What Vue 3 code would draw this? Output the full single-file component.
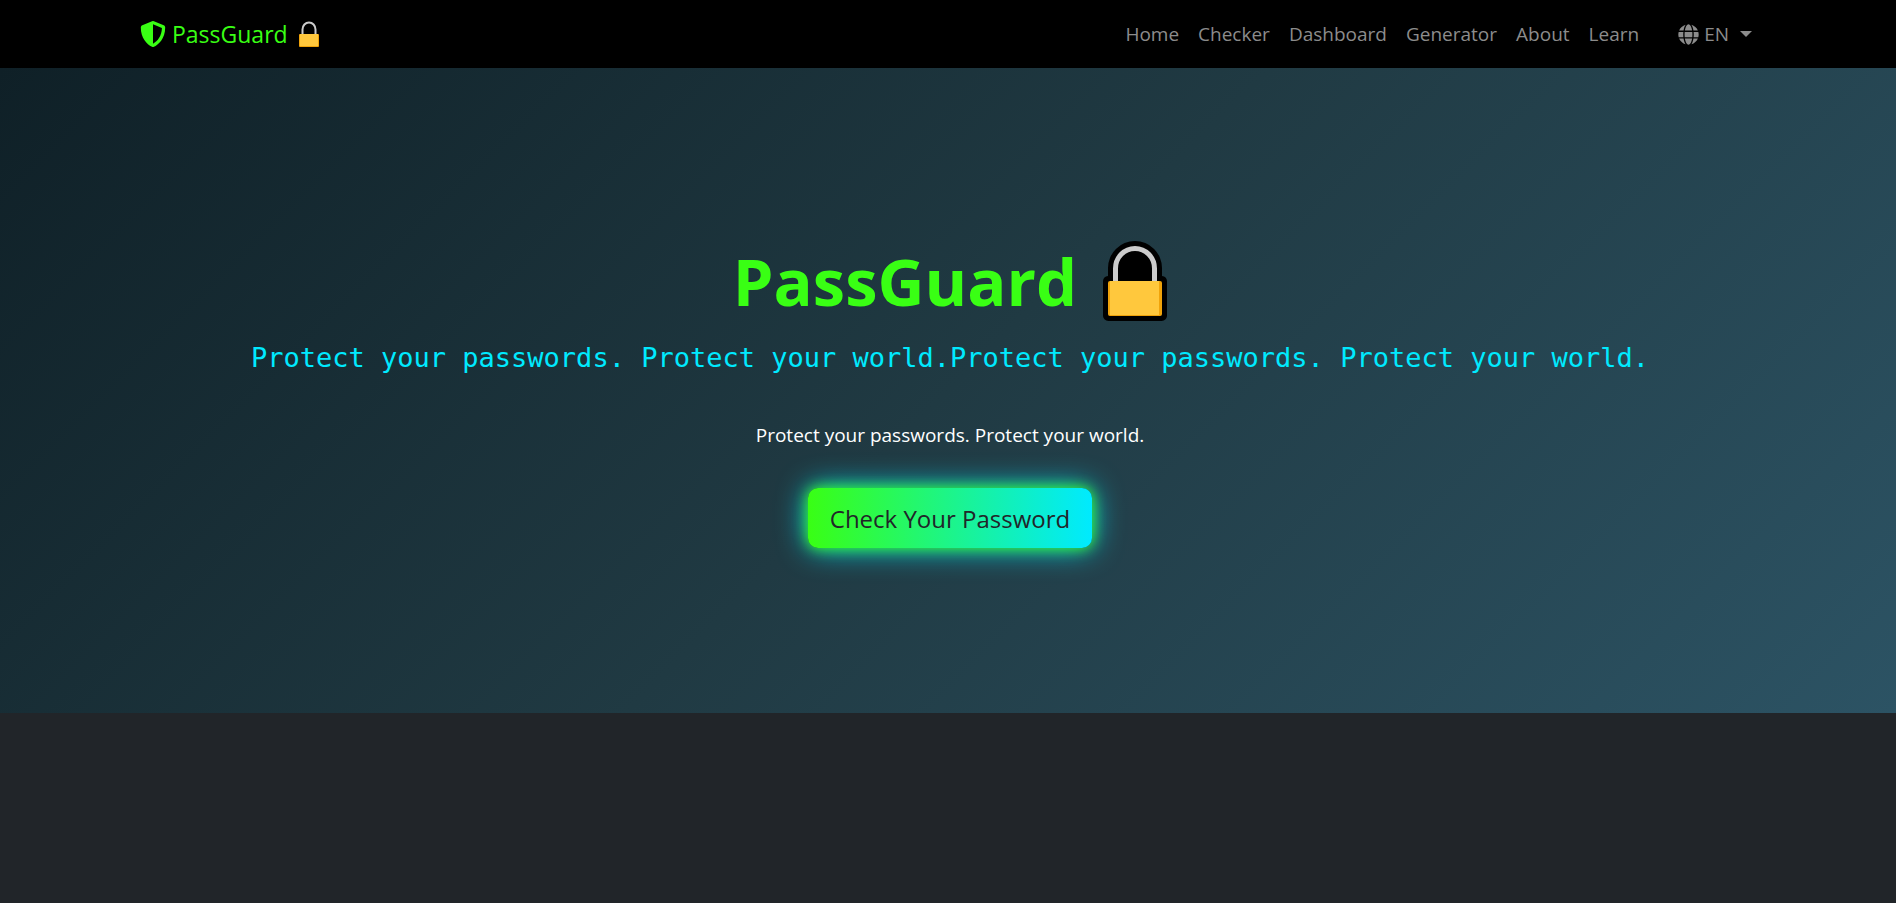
<template>
    <div class="page">
        <header class="navbar">
            <div class="container">
                <a class="brand" href="#">
                    <svg class="shield" viewBox="0 0 512 512" aria-hidden="true">
                        <path d="M466.500 83.700l-192-80a48.150 48.150 0 0 0-36.900 0l-192 80C27.700 91.100 16 108.600 16 128c0 198.500 114.500 335.700 221.500 380.300 11.800 4.900 25.100 4.900 36.900 0C360.100 472.600 496 349.300 496 128c0-19.400-11.700-36.900-29.500-44.300zM256.100 446.300l-.1-381 175.900 73.300c-3.300 151.400-82.100 261.100-175.800 307.700z" />
                    </svg>
                    <span>PassGuard</span>
                    <svg class="brand-lock" viewBox="0 0 20 26" aria-hidden="true">
                        <path class="shackle" d="M3.500 14V8.500a6.500 7 0 0 1 13 0V14" />
                        <rect class="lock-side" x="0" y="13" width="20" height="13" rx="1" />
                        <rect class="lock-body" x="1" y="13" width="18" height="12" />
                    </svg>
                </a>
                <nav class="nav">
                    <a v-for="link in links" :key="link" class="nav-link" href="#">{{ link }}</a>
                    <button class="lang" type="button" aria-haspopup="true">
                        <svg class="globe" viewBox="0 0 496 512" aria-hidden="true">
                            <path d="M336.500 160C322 70.700 287.800 8 248 8s-74 62.700-88.500 152h177zM152 256c0 22.200 1.200 43.500 3.300 64h185.300c2.100-20.500 3.300-41.800 3.300-64s-1.200-43.500-3.300-64H155.300c-2.100 20.500-3.300 41.800-3.300 64zm324.700-96c-28.600-67.900-86.500-120.400-158-141.600 24.400 33.800 41.200 84.700 50 141.600h108zM177.200 18.400C105.800 39.600 47.800 92.100 19.300 160h108c8.700-56.900 25.500-107.800 49.900-141.600zM487.400 192H372.700c2.100 21 3.300 42.500 3.300 64s-1.200 43-3.300 64h114.600c5.500-20.500 8.600-41.800 8.600-64s-3.100-43.500-8.500-64zM120 256c0-21.500 1.200-43 3.300-64H8.600C3.200 212.500 0 233.800 0 256s3.200 43.500 8.600 64h114.600c-2-21-3.200-42.500-3.200-64zm39.500 96c14.500 89.300 48.700 152 88.500 152s74-62.700 88.500-152h-177zm159.300 141.600c71.400-21.200 129.400-73.700 158-141.600h-108c-8.800 56.900-25.600 107.800-50 141.600zM19.300 352c28.600 67.900 86.500 120.400 158 141.600-24.400-33.800-41.200-84.700-50-141.600h-108z" />
                        </svg>
                        <span>EN</span>
                        <span class="caret"></span>
                    </button>
                </nav>
            </div>
        </header>

        <main class="hero">
            <h1 class="title">
                <span>PassGuard</span>
                <svg class="title-lock" viewBox="0 0 64 80" aria-hidden="true">
                    <path class="outline" d="M5.500 80A5.500 5.500 0 0 1 0 74V40a5.500 5.500 0 0 1 5-5V27a27 27 0 0 1 54 0v8a5.500 5.500 0 0 1 5 5v34a5.500 5.500 0 0 1-5.500 6z" />
                    <path class="shackle" d="M12.500 42V27.500a19.500 20 0 0 1 39 0V42" />
                    <rect class="lock-side" x="5" y="40" width="54" height="35" rx="2" />
                    <rect class="lock-body" x="7" y="40" width="49" height="34" />
                </svg>
            </h1>
            <p class="tagline">{{ slogan }}{{ slogan }}</p>
            <p class="lead">{{ slogan }}</p>
            <button class="cta" type="button">Check Your Password</button>
        </main>
    </div>
</template>

<script setup>
const links = ['Home', 'Checker', 'Dashboard', 'Generator', 'About', 'Learn']
const slogan = 'Protect your passwords. Protect your world.'
</script>

<style>
body {
    background: #212529;
}
</style>

<style scoped>
.page {
    font-family: "Open Sans", "Noto Sans", sans-serif;
    color: #fff;
}

.navbar {
    background: #000;
}

.container {
    display: flex;
    align-items: center;
    justify-content: space-between;
    max-width: 1612px;
    height: 68px;
    margin: 0 auto;
    padding: 0 18px 0 14px;
}

.brand {
    display: flex;
    align-items: center;
    gap: 6px;
    color: #39ff14;
    font-size: 23px;
    line-height: 36px;
    text-decoration: none;
}

.shield {
    width: 26px;
    height: 26px;
    fill: currentColor;
}

.brand-lock {
    width: 20px;
    height: 26px;
    margin-left: 5px;
}

.shackle {
    fill: none;
    stroke: #ccc;
    stroke-width: 2;
}

.lock-side {
    fill: #f0a30a;
}

.lock-body {
    fill: #ffc83d;
}

.nav {
    display: flex;
    align-items: center;
    gap: 19px;
}

.nav-link,
.lang {
    color: #8c8c8c;
    font-size: 19px;
    line-height: 30px;
    text-decoration: none;
}

.lang {
    display: flex;
    align-items: center;
    gap: 5px;
    margin-left: 20px;
    padding: 0;
    border: 0;
    background: none;
    font-family: inherit;
    cursor: pointer;
}

.globe {
    width: 21px;
    height: 21px;
    fill: currentColor;
}

.caret {
    margin-left: 6px;
    border-top: 6px solid;
    border-right: 6px solid transparent;
    border-left: 6px solid transparent;
}

.hero {
    display: flex;
    flex-direction: column;
    align-items: center;
    padding: 168px 20px 165px 24px;
    background: linear-gradient(135deg, #0f2027, #203a43, #2c5364);
    text-align: center;
}

.title {
    display: flex;
    align-items: center;
    gap: 26px;
    margin: 0 0 9px;
    color: #39ff14;
    font-size: 65px;
    font-weight: 700;
    line-height: 90px;
}

.title-lock {
    width: 64px;
    height: 80px;
}

.title-lock .shackle {
    stroke-width: 5;
}

.outline {
    fill: #000;
}

.tagline {
    margin: 0 0 40px;
    color: #00eaff;
    font-family: "DejaVu Sans Mono", monospace;
    font-size: 27px;
    line-height: 45px;
}

.lead {
    margin: 0 0 38px;
    font-size: 19px;
    line-height: 30px;
}

.cta {
    padding: 13px 22px 11px;
    border: 0;
    border-radius: 10px;
    background: linear-gradient(90deg, #39ff14, #00eaff);
    box-shadow: 0 0 14px #39ff14, 0 0 30px #00eaff;
    color: #212529;
    font-family: inherit;
    font-size: 24px;
    line-height: 36px;
    cursor: pointer;
}
</style>
